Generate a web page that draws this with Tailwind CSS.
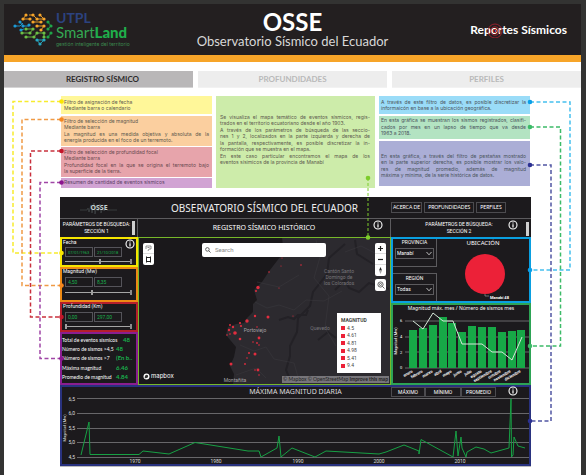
<!DOCTYPE html>
<html lang="es">
<head>
<meta charset="utf-8">
<meta name="viewport" content="width=device-width, initial-scale=1">
<title>OSSE - Observatorio Sísmico del Ecuador</title>
<script src="https://cdn.jsdelivr.net/npm/@tailwindcss/browser@4"></script>
</head>
<body class="bg-[#333332] pl-1 pr-[5px] pt-1 min-h-screen flex flex-col overflow-x-hidden font-['Inter',sans-serif]">
<svg class="hidden">
  <symbol id="info" viewBox="0 0 10 10"><circle cx="5" cy="5" r="4" fill="none" stroke="#fff" stroke-width="1.1"/><path d="M5 2.4v1M5 4.2v3.2" stroke="#fff" stroke-width="1.2"/></symbol>
</svg>
<div class="relative bg-white grow">

<header class="bg-[#231f20] border-b-[7px] border-[#f7a529] h-[58px] grid grid-cols-[1fr_auto_1fr] items-center">
  <div class="flex items-center gap-[3px] pl-[9px]">
    <svg class="w-10 h-[34px]" viewBox="0 0 40 34">
      <g stroke-width=".9" fill="none">
        <path stroke="#1c9ad6" d="M2 13h5l3-3M7 9l3 4h6M8 17l3-1"/>
        <path stroke="#f7a529" d="M13 2l-3 4h7M20 2h-4M20 2l4 4h7M27 2l4 4M20 9h8M24 13h7l-3 4"/>
        <path stroke="#6cbf45" d="M9 20h8l3-4h-7M13 24h8l3-4h7M31 20v4"/>
        <path stroke="#1fa548" d="M35 9l3 4l-3 3M38 20l-3 4"/>
        <path stroke="#27a9c4" d="M24 27h7l-4 4z"/>
      </g>
      <g fill="#1c9ad6"><circle cx="2" cy="13" r="1.6"/><circle cx="7" cy="9" r="1.6"/><circle cx="8" cy="17" r="1.6"/><circle cx="10" cy="13" r="1.6"/><circle cx="16" cy="12" r="1.6"/></g>
      <g fill="#f7a529"><circle cx="13" cy="2" r="1.6"/><circle cx="20" cy="2" r="1.6"/><circle cx="27" cy="2" r="1.6"/><circle cx="10" cy="6" r="1.6"/><circle cx="17" cy="6" r="1.6"/><circle cx="24" cy="6" r="1.6"/><circle cx="31" cy="6" r="1.6"/><circle cx="20" cy="9" r="1.6"/><circle cx="28" cy="9" r="1.6"/><circle cx="24" cy="13" r="1.6"/><circle cx="31" cy="13" r="1.6"/><circle cx="28" cy="17" r="1.6"/></g>
      <g fill="#6cbf45"><circle cx="13" cy="16" r="1.6"/><circle cx="20" cy="16" r="1.6"/><circle cx="9" cy="20" r="1.6"/><circle cx="17" cy="20" r="1.6"/><circle cx="24" cy="20" r="1.6"/><circle cx="13" cy="24" r="1.6"/><circle cx="21" cy="24" r="1.6"/><circle cx="31" cy="20" r="1.6"/><circle cx="31" cy="24" r="1.6"/></g>
      <g fill="#1fa548"><circle cx="35" cy="9" r="1.6"/><circle cx="38" cy="13" r="1.6"/><circle cx="35" cy="16" r="1.6"/><circle cx="38" cy="20" r="1.6"/><circle cx="35" cy="24" r="1.6"/></g>
      <g fill="#27a9c4"><circle cx="24" cy="27" r="1.6"/><circle cx="31" cy="27" r="1.6"/><circle cx="27" cy="31" r="1.6"/></g>
    </svg>
    <div class="whitespace-nowrap">
      <div class="font-['Lato',sans-serif] font-bold text-[14px] leading-[14px] text-[#2c427f]">UTPL</div>
      <div class="font-['Lato',sans-serif] text-[15px] leading-[15px] text-[#35a853]">Smart<b class="font-black text-[#1fae4b]">Land</b></div>
      <div class="text-[5px] leading-[8px] text-[#3c8a50]">gestión inteligente del territorio</div>
    </div>
  </div>
  <div class="text-center text-white font-['Lato',sans-serif] whitespace-nowrap">
    <h1 class="text-[24px] leading-[24px] font-bold">OSSE</h1>
    <p class="text-[13px] leading-[15px] text-[#d8d8d8]">Observatorio Sísmico del Ecuador</p>
  </div>
  <div class="flex justify-end pr-[14px]">
    <a href="#" class="relative font-['Lato',sans-serif] font-bold text-[12px] leading-4 text-white whitespace-nowrap">Reportes Sísmicos
      <svg class="absolute left-[17px] top-0 size-4" viewBox="0 0 16 16" fill="none" stroke="#b3202e"><circle cx="8" cy="9" r="7" stroke-width=".8"/><circle cx="8" cy="9" r="4.2" stroke-width=".9"/><circle cx="8" cy="9" r="1.6"/></svg>
    </a>
  </div>
</header>

<nav class="mt-[9px] grid grid-cols-3 gap-[5px] font-['Lato',sans-serif] font-bold text-[8px] leading-4 text-center">
  <a href="#" class="bg-[#b9b7b8] text-[#2d2b2c] border-b border-[#d5d4d5] pl-2">REGISTRO SÍSMICO</a>
  <a href="#" class="bg-[#ededed] text-[#b9b9b9] border-b border-[#f2f2f2]">PROFUNDIDADES</a>
  <a href="#" class="bg-[#ededed] text-[#b9b9b9] border-b border-[#f2f2f2]">PERFILES</a>
</nav>

<section class="mt-2 pl-[57px] pr-[51px] grid grid-cols-[151fr_159fr_151fr] gap-1 text-[5px] leading-[6px] text-[#5d5a4e] whitespace-nowrap">
  <div class="flex flex-col gap-px">
    <div class="bg-[#fff799] h-[18px] px-[3px] pt-[3px]"><p>Filtro de asignación de fecha</p><p>Mediante barra o calendario</p></div>
    <div class="bg-[#fbcf9f] h-[30px] px-[3px] pt-[2px] mt-px"><p>Filtro de selección de magnitud</p><p>Mediante barra</p><p class="mt-px [text-align-last:justify]">La magnitud es una medida objetiva y absoluta de la</p><p>energía producida en el foco de un terremoto.</p></div>
    <div class="bg-[#e7a4ab] h-[30px] px-[3px] pt-[2px] text-[#6a4a50]"><p>Filtro de selección de profundidad focal</p><p>Mediante barra</p><p class="mt-px [text-align-last:justify]">Profundidad focal en la que se origina el terremoto bajo</p><p>la superficie de la tierra.</p></div>
    <div class="bg-[#d1a3d3] h-[10px] px-[3px] pt-px text-[#5c4163]"><p>Resumen de cantidad de eventos sísmicos</p></div>
  </div>
  <div class="bg-[#cdecaa] pl-1 pr-[5px] pt-[18px] flex flex-col gap-px">
    <div><p class="[text-align-last:justify]">Se visualiza el mapa temático de eventos sísmicos, regis-</p><p>trados en el territorio ecuatoriano desde el año 1903.</p></div>
    <div><p class="[text-align-last:justify]">A través de los parámetros de búsqueda de las seccio-</p><p class="[text-align-last:justify]">nes 1 y 2, localizados en la parte izquierda y derecha de</p></div>
    <div><p class="[text-align-last:justify]">la pantalla, respectivamente, es posible discretizar la in-</p><p>formación que se muestra en el mapa.</p></div>
    <div><p class="[text-align-last:justify]">En este caso particular encontramos el mapa de los</p><p>eventos sísimicos de la provincia de Manabí</p></div>
  </div>
  <div class="flex flex-col gap-[2px] text-[#4a545c]">
    <div class="bg-[#9adcf8] h-[18px] pl-[2px] pr-1 pt-[3px]"><p class="[text-align-last:justify]">A través de este filtro de datos, es posible discretizar la</p><p>informaicón en base a la ubicación geográfica.</p></div>
    <div class="bg-[#b3e3c2] h-[23px] pl-[2px] pr-1 pt-px"><p class="[text-align-last:justify]">En esta gráfica se muestran los sismos registrados, clasifi-</p><p class="mt-px [text-align-last:justify]">cados por mes en un lapso de tiempo que va desde</p><p>1963 a 2018.</p></div>
    <div class="bg-[#abaed6] h-[45px] pl-[2px] pr-1 pt-3"><p class="[text-align-last:justify]">En esta gráfica, a través del filtro de pestañas mostrado</p><p class="[text-align-last:justify]">en la parte superior derecha, es posible mostrar los valo-</p><p class="mt-px [text-align-last:justify]">res de magnitud promedio, además de magnitud</p><p>máxima y mínima, de la serie histórica de datos.</p></div>
  </div>
</section>

<main class="mt-[9px] ml-14 mr-[50px] bg-[#1c1a1d] text-white font-['Roboto',sans-serif] whitespace-nowrap shadow-[0_1px_0_#bbb]">
  <div class="grid grid-cols-[78px_1fr_140px] h-[22px] items-center border-b border-[#5c5b5e]">
    <div class="relative grid place-items-center text-[7px] leading-[10px] font-bold font-['Noto_Sans',sans-serif] text-[#c4d0d0]">
      <svg class="col-start-1 row-start-1 w-[38px] h-[14px]" viewBox="0 0 38 14" fill="none" stroke="#4a5052" stroke-width=".6"><path d="M0 9h7l1-2 1 4 2-7 1 8 2-10 1 11 2-9 1 6 2-7 1 9 2-6 1 4 2-3 1 2h10"/></svg>
      <span class="col-start-1 row-start-1 relative">OSSE</span>
    </div>
    <h2 class="text-center text-[10px] leading-[14px] text-[#eee] font-['Noto_Sans',sans-serif]">OBSERVATORIO SÍSMICO DEL ECUADOR</h2>
    <div class="flex gap-[2px] text-[5px] leading-[9px] font-['Lato',sans-serif]">
      <button class="border border-[#4c4b4f] px-px">ACERCA DE</button><button class="border border-[#4c4b4f] px-[3px]">PROFUNDIDADES</button><button class="border border-[#4c4b4f] px-[3px]">PERFILES</button>
    </div>
  </div>

  <div class="grid grid-cols-[78px_1fr_140px]">
    <!-- Sección 1 -->
    <div class="flex flex-col">
      <div class="h-[18px] flex items-center justify-center border-r border-[#5c5b5e] relative pr-1 text-[5px] leading-[7px] text-center"><h3>PARÁMETROS DE BÚSQUEDA:<br>SECCIÓN 1</h3><span class="absolute right-[2px] top-[2px] w-[3px] h-[14px] bg-[#cfcfcf]"></span></div>
      <div class="relative h-[30px] border-2 border-[#f6e500] px-[3px] text-[5px]">
        <div class="leading-[7px] -ml-[2px]">Fecha</div>
        <svg class="absolute right-px top-0 size-[10px]"><use href="#info"/></svg>
        <div class="mt-px flex gap-px text-[#19b04c] text-[4px]"><input aria-label="Fecha desde" value="07/01/1963" class="w-7 h-[10px] border border-[#55545a] pl-[2px]"><input aria-label="Fecha hasta" value="21/10/2018" class="w-7 h-[10px] border border-[#55545a] pl-[2px]"></div>
        <div class="mt-[2px] mr-px h-[5px] flex items-center border-r-2 border-[#8c8c8c]"><input type="range" aria-label="Rango de fecha" value="54" class="w-full h-px appearance-none bg-[#a5a5a5] [&::-webkit-slider-thumb]:appearance-none [&::-webkit-slider-thumb]:w-[2px] [&::-webkit-slider-thumb]:h-[5px] [&::-webkit-slider-thumb]:bg-[#a0a0a0]"></div>
      </div>
      <div class="h-[35px] border-2 border-[#ee8a14] px-[3px] text-[5px]">
        <div class="leading-[5px] -ml-[2px]">Magnitud (Mw)</div>
        <div class="mt-[3px] flex gap-px text-[#19b04c]"><input aria-label="Magnitud mínima" value="4,50" class="w-7 h-[10px] border border-[#55545a] pl-[2px]"><input aria-label="Magnitud máxima" value="8,35" class="w-7 h-[10px] border border-[#55545a] pl-[2px]"></div>
        <div class="mt-[3px] mr-px h-[5px] flex items-center border-r-2 border-[#8c8c8c]"><input type="range" aria-label="Rango de magnitud" value="42" class="w-full h-px appearance-none bg-[#a5a5a5] [&::-webkit-slider-thumb]:appearance-none [&::-webkit-slider-thumb]:w-[2px] [&::-webkit-slider-thumb]:h-[5px] [&::-webkit-slider-thumb]:bg-[#a0a0a0]"></div>
      </div>
      <div class="h-[30px] border-2 border-[#b51f2b] px-[3px] text-[5px]">
        <div class="leading-[5px] -ml-[2px]">Profundidad (Km)</div>
        <div class="mt-[3px] flex gap-px text-[#19b04c]"><input aria-label="Profundidad mínima" value="0,00" class="w-7 h-[10px] border border-[#55545a] pl-[2px]"><input aria-label="Profundidad máxima" value="297,00" class="w-7 h-[10px] border border-[#55545a] pl-[2px]"></div>
        <div class="mt-[2px] mr-px h-[5px] flex items-center border-r-2 border-[#8c8c8c]"><input type="range" aria-label="Rango de profundidad" value="0" class="w-full h-px appearance-none bg-[#a5a5a5] [&::-webkit-slider-thumb]:appearance-none [&::-webkit-slider-thumb]:w-[2px] [&::-webkit-slider-thumb]:h-[5px] [&::-webkit-slider-thumb]:bg-[#a0a0a0]"></div>
      </div>
      <dl class="h-[53px] border-2 border-[#8a1e90] flex flex-col justify-around py-px text-[5px] leading-[8px] font-['Lato',sans-serif]">
        <div class="flex"><dt class="w-[61px]">Total de eventos sísmicos</dt><dd class="text-[6px] font-bold text-[#19b04c]">48</dd></div>
        <div class="flex"><dt class="w-[54px]">Número de sismos &gt;4,5</dt><dd class="text-[6px] font-bold text-[#19b04c]">48</dd></div>
        <div class="flex"><dt class="w-[54px]">Número de sismos &gt;7</dt><dd class="text-[6px] font-bold text-[#19b04c]">(En b..</dd></div>
        <div class="flex"><dt class="w-[54px]">Máxima magnitud</dt><dd class="text-[6px] font-bold text-[#19b04c]">6.46</dd></div>
        <div class="flex"><dt class="w-[54px]">Promedio de magnitud</dt><dd class="text-[6px] font-bold text-[#19b04c]">4.84</dd></div>
      </dl>
    </div>

    <!-- Mapa -->
    <div class="relative flex flex-col">
      <div class="h-[18px] flex items-center justify-center border-r border-[#5c5b5e] text-[7px] font-['Noto_Sans',sans-serif]"><h3>REGISTRO SÍSMICO HISTÓRICO</h3><svg class="absolute right-2 top-px size-[10px]"><use href="#info"/></svg></div>
      <div class="relative grow border border-[#77b82a] bg-[#1a181b] overflow-hidden">
        <svg class="absolute inset-0 w-full h-full" viewBox="139 238 251 146" preserveAspectRatio="none">
          <path fill="#2c2a2f" d="M282 237L283 247L280 257L270 270L262 282L254 290L257 300L253 304L253 312L247 318L244 323L236 324L228 327L226 335L231 341L236 347L234 357L230 366L234 374L233 385H392V237Z"/>
          <g fill="none" stroke="#232126" stroke-width="2"><path d="M292 384l-6-14 4-14 0-10 7-14 1-14 12-12 3-14 14-18 2-16 16-14"/><path d="M279 320l9-3 6 2 4-4 8 0 2-5M335 290l10-10 4 8 10 4 10-9 20 6M355 240l2 14 16 10M318 340l10-8 8 6"/></g>
          <g fill="none" stroke="#39373c" stroke-width=".6"><path d="M255 302l12 6 12-3 15 5 12-10 18 1 18-10M257 282l22 5 20-12M240 345l14 6 12-4 8 12 20 4 4 14M316 240l4 17-6 21 15 18-4 32 11 18M345 252l16-6 20 10M236 375l20-7 10 10"/></g>
          <g fill="#e22d3f"><circle cx="258" cy="287.500" r="1.700"/><circle cx="256" cy="291" r="1"/><circle cx="301" cy="265" r=".8"/><circle cx="282" cy="258" r=".6"/><circle cx="281" cy="266" r=".6"/><circle cx="269" cy="272" r=".8"/><circle cx="279" cy="288" r=".6"/><circle cx="293" cy="316" r=".6"/><circle cx="255" cy="316" r="1.200"/><circle cx="268" cy="317" r="1.500"/><circle cx="247" cy="321" r="1.700"/><circle cx="240" cy="323" r="1.100"/><circle cx="241" cy="326" r="1.100"/><circle cx="230" cy="325" r="1"/><circle cx="233" cy="327" r="1.200"/><circle cx="229" cy="330" r="1.200"/><circle cx="235" cy="333" r="1.800"/><circle cx="227" cy="335" r=".8"/><circle cx="230" cy="334" r=".8"/><circle cx="240" cy="339" r="1.300"/><circle cx="257" cy="327" r=".8"/><circle cx="259" cy="338" r="1.400"/><circle cx="253" cy="342" r=".8"/><circle cx="257" cy="343" r=".9"/><circle cx="259" cy="345" r=".8"/><circle cx="249" cy="353" r="1"/><circle cx="255" cy="354" r="1.500"/><circle cx="247" cy="358" r=".8"/><circle cx="245" cy="364" r=".9"/><circle cx="231" cy="364" r="1.500"/><circle cx="255" cy="370" r=".8"/><circle cx="258" cy="370" r="1.400"/><circle cx="259" cy="375" r=".8"/></g>
          <g fill="#77757a" font-size="5" font-family="Roboto, sans-serif" text-anchor="middle"><text x="339" y="273">Cantón Santo</text><text x="339" y="279">Domingo de</text><text x="339" y="285">los Colorados</text><text x="255" y="332" fill="#a5a3a8">Portoviejo</text><text x="320" y="330">Quevedo</text><text x="235" y="382" fill="#a5a3a8">Montañita</text></g>
        </svg>
        <div class="absolute left-1 top-[5px] w-[11px] h-[22px] bg-white rounded-[2px] flex flex-col">
          <button aria-label="Selección libre" class="h-[11px] grid place-items-center border-b border-[#ddd]"><svg class="size-[7px]" viewBox="0 0 7 7" fill="none" stroke="#777" stroke-width=".8"><path d="M1 4V1h5v3H4l-1 2M2.500 2.500h2"/></svg></button>
          <button aria-label="Selección rectangular" class="h-[11px] grid place-items-center"><svg class="size-[7px]" viewBox="0 0 7 7" fill="none" stroke="#222"><rect x="1.500" y="1.500" width="4" height="4"/><path d="M1 1h1M5 1h1M1 6h1M5 6h1"/></svg></button>
        </div>
        <label class="absolute left-[63px] right-[64px] top-[5px] h-[14px] bg-white rounded-[2px] flex items-center pl-[3px] gap-1">
          <svg class="size-[6px] shrink-0" viewBox="0 0 6 6" fill="none" stroke="#555" stroke-width=".9"><circle cx="2.400" cy="2.400" r="1.800"/><path d="M3.700 3.700L5.600 5.600"/></svg>
          <input type="search" placeholder="Search" aria-label="Buscar" class="grow min-w-0 text-[6px] leading-[8px] placeholder:text-[#888]">
        </label>
        <div class="absolute right-1 top-[5px] w-[11px] flex flex-col gap-[3px] text-[#222]">
          <div class="bg-white rounded-[2px] h-[33px] grid grid-rows-3 divide-y divide-[#ddd]">
            <button aria-label="Acercar" class="grid place-items-center"><svg class="size-[5px]" viewBox="0 0 5 5" stroke="#222" stroke-width="1.200"><path d="M0 2.500h5M2.500 0v5"/></svg></button>
            <button aria-label="Alejar" class="grid place-items-center"><svg class="size-[5px]" viewBox="0 0 5 5" stroke="#222" stroke-width="1.200"><path d="M0 2.500h5"/></svg></button>
            <button aria-label="Norte" class="grid place-items-center"><svg class="size-[7px]" viewBox="0 0 7 7"><path d="M3.500 0L5 3.500H2z" fill="#222"/><path d="M3.500 7L5 3.500H2z" fill="#aaa"/></svg></button>
          </div>
          <button aria-label="Ajustar zoom" class="bg-white rounded-[2px] h-[12px] grid place-items-center"><svg class="size-2" viewBox="0 0 8 8" fill="none" stroke="#555" stroke-width=".9"><circle cx="3.500" cy="3.500" r="2.600"/><circle cx="3.500" cy="3.500" r="1"/><path d="M5.400 5.400L7.500 7.500"/></svg></button>
        </div>
        <div class="absolute right-[9px] bottom-[11px] w-[44px] h-[60px] bg-white text-[#444] pl-[4px] pt-1 text-[5px] leading-[6px]">
          <div class="font-bold">MAGNITUD</div>
          <ul class="leading-[7px] mt-px">
            <li class="flex items-center gap-[2px] h-[8px]"><i class="size-[4px] bg-[#ec2138]"></i>4.5</li><li class="flex items-center gap-[2px] h-[7px]"><i class="size-[4px] bg-[#ec2138]"></i>4.61</li><li class="flex items-center gap-[2px] h-[8px]"><i class="size-[4px] bg-[#ec2138]"></i>4.81</li><li class="flex items-center gap-[2px] h-[7px]"><i class="size-[4px] bg-[#ec2138]"></i>4.98</li><li class="flex items-center gap-[2px] h-[8px]"><i class="size-[4px] bg-[#ec2138]"></i>5.41</li><li class="flex items-center gap-[2px] h-[7px]"><i class="size-[4px] bg-[#ec2138]"></i>9.4</li>
          </ul>
        </div>
        <div class="absolute left-1 bottom-1 flex items-center gap-px text-[6px] leading-[8px] font-['Inter',sans-serif]"><svg class="size-[7px]" viewBox="0 0 7 7"><circle cx="3.500" cy="3.500" r="3" fill="#fff"/><path d="M1.700 5.300c0-4 2-3.800 3.200-3 1 2-.8 3.200-3.200 3z" fill="#333"/></svg>mapbox</div>
        <div class="absolute right-px bottom-px bg-[#77757a] text-[#222] text-[5px] leading-[7px] px-px font-['Lato',sans-serif]">© Mapbox © OpenStreetMap <b>Improve this map</b></div>
      </div>
      <svg class="absolute right-[20px] -top-[44px] w-[6px] h-[65px] z-10" viewBox="0 0 6 65"><path d="M3 3V62" stroke="#7dcc2c" stroke-width="1" stroke-dasharray="3 2"/><circle cx="3" cy="3" r="2.300" fill="#7dcc2c"/><circle cx="3" cy="62.500" r="2.300" fill="#7dcc2c"/></svg>
    </div>

    <!-- Sección 2 -->
    <div class="flex flex-col">
      <div class="relative h-[18px] flex items-center justify-center pr-1 text-[5px] leading-[7px] text-center"><h3>PARÁMETROS DE BÚSQUEDA:<br>SECCIÓN 2</h3><svg class="absolute right-[13px] top-px size-[10px]"><use href="#info"/></svg><span class="absolute right-[2px] top-[3px] w-[3px] h-[14px] bg-[#cfcfcf]"></span></div>
      <div class="h-[66px] border-2 border-[#0a9fe0] grid grid-cols-[44px_1fr]">
        <div class="flex flex-col gap-[6px] text-[5px] leading-[6px] text-center">
          <label class="h-7 border-r border-b border-[#5c5b5e] px-[2px] flex flex-col gap-[3px]">PROVINCIA<span class="relative block"><select class="w-full h-[11px] border border-[#5c5b5e] appearance-none bg-transparent pl-px text-[5px] leading-[9px]"><option>Manabí</option></select><svg class="absolute right-[2px] top-[3px] w-[6px] h-[5px]" viewBox="0 0 6 5" fill="none" stroke="#ccc" stroke-width=".9"><path d="M.5 1L3 3.800 5.500 1"/></svg></span></label>
          <label class="h-7 border-r border-t border-[#5c5b5e] px-[2px] pt-px flex flex-col gap-[3px]">REGIÓN<span class="relative block"><select class="w-full h-[11px] border border-[#5c5b5e] appearance-none bg-transparent pl-px text-[5px] leading-[9px]"><option>Todas</option></select><svg class="absolute right-[2px] top-[3px] w-[6px] h-[5px]" viewBox="0 0 6 5" fill="none" stroke="#ccc" stroke-width=".9"><path d="M.5 1L3 3.800 5.500 1"/></svg></span></label>
        </div>
        <div class="flex flex-col items-center">
          <h4 class="text-[6px] leading-[8px] font-['Noto_Sans',sans-serif]">UBICACIÓN</h4>
          <svg class="w-[66px] h-[52px] mt-px" viewBox="0 0 66 52"><circle cx="35" cy="26" r="20" fill="#ec2138"/><path d="M35 46v2h4" stroke="#aaa" stroke-width=".6" fill="none"/><text x="40" y="51" font-size="4" font-weight="bold" fill="#fff" font-family="Roboto, sans-serif">Manabí 48</text></svg>
        </div>
      </div>
      <div class="grow border-2 border-[#2da355]">
        <svg class="w-full block" viewBox="393 305 136 78" font-family="Roboto, sans-serif" fill="#fff">
          <text x="461" y="310" font-size="5" font-family="Noto Sans, sans-serif" text-anchor="middle">Magnitud máx. mes / Número de sismos mes</text>
          <path d="M405 321h124M405 337h124M405 352h124M405 368h124" stroke="#68676a" stroke-width="1"/>
          <g font-size="4" text-anchor="middle"><text x="401" y="322">6</text><text x="401" y="338">4</text><text x="401" y="354">2</text><text x="401" y="369">0</text><text transform="translate(397 341) rotate(-90)">Magnitud (Mw)</text></g>
          <path fill="#17a847" d="M409 330h8v38h-8zM419 328h8v40h-8zM429 325h8v43h-8zM439 317h8v51h-8zM448 323h8v45h-8zM458 332h8v36h-8zM468 326h8v42h-8zM478 327h8v41h-8zM488 327h8v41h-8zM498 332h8v36h-8zM508 331h8v37h-8zM517 330h8v38h-8z"/>
          <path d="M413 321L423 329L433 313L443 321L453 321L462 344H482L492 352H502L512 360L522 337" fill="none" stroke="#d5e8d9" stroke-width="1"/>
          <g font-size="4" font-weight="bold" text-anchor="end"><text transform="translate(413 372) rotate(-30)">enero</text><text transform="translate(423 372) rotate(-30)">febrero</text><text transform="translate(433 372) rotate(-30)">marzo</text><text transform="translate(442 372) rotate(-30)">abril</text><text transform="translate(452 372) rotate(-30)">mayo</text><text transform="translate(462 372) rotate(-30)">junio</text><text transform="translate(472 372) rotate(-30)">julio</text><text transform="translate(482 372) rotate(-30)">agosto</text><text transform="translate(492 372) rotate(-30)">septiembre</text><text transform="translate(501 372) rotate(-30)">octubre</text><text transform="translate(511 372) rotate(-30)">noviembre</text><text transform="translate(521 372) rotate(-30)">diciembre</text></g>
        </svg>
      </div>
    </div>
  </div>

  <div class="border-2 border-[#29327f]">
    <div class="grid grid-cols-[138px_1fr_138px] h-[10px]">
      <h3 class="col-start-2 text-center text-[7px] leading-[9px] text-[#ddd] font-['Noto_Sans',sans-serif]">MÁXIMA MAGNITUD DIARIA</h3>
      <div class="relative grid grid-cols-[34px_36px_35px] text-[5px] leading-[8px]"><button class="border border-[#4c4b4f]">MÁXIMO</button><button class="border border-[#4c4b4f]">MÍNIMO</button><button class="border border-[#4c4b4f]">PROMEDIO</button><svg class="absolute right-[11px] -top-px size-[10px]"><use href="#info"/></svg></div>
    </div>
    <svg class="w-full block" viewBox="62 397 467 67" font-family="Roboto, sans-serif" fill="#ddd">
      <path d="M77 398.500h452M77 413.500h452M77 428.500h452M77 442.500h452M77 457.500h452" stroke="#68676a"/>
      <g font-size="5" text-anchor="end"><text x="75" y="401">6,5</text><text x="75" y="415">6,0</text><text x="75" y="430">5,5</text><text x="75" y="444">5,0</text><text x="75" y="459">4,5</text></g>
      <text transform="translate(66 428) rotate(-90)" font-size="4" text-anchor="middle">Magnitud (Mw)</text>
      <g font-size="5" text-anchor="middle"><text x="135" y="463">1970</text><text x="216" y="463">1980</text><text x="298" y="463">1990</text><text x="379" y="463">2000</text><text x="460" y="463">2010</text></g>
      <path fill="none" stroke="#17a044" stroke-width="1" d="M81 455L89 422L90 454.500H139L143 451L169 454L195 442.500L248 451H259L261 457L277 448L279 436L281 457L292 448L315 457L326 451L379 454L386 452L404 445L419 451V454L421 439.500L453 457L456 431L458 456L461 437L462 448L466 457L467 452L476 447L484 449L491 453L509 448L511 399L511.500 457L513 455L514 437L518 446L525 448"/>
    </svg>
  </div>
</main>

<!-- Conectores entre las notas y los paneles -->
<svg class="absolute left-0 top-0 w-[62px] h-[471px] pointer-events-none" viewBox="4 4 62 471" fill="none" stroke-width="1.500" stroke-dasharray="4 2.500">
  <g stroke="#f7ec2e"><path d="M61 101.500H13V253H61"/></g><g stroke="#f09a45"><path d="M61 119.500H22V285.500H61"/></g><g stroke="#c9303d"><path d="M61 151H30.500V317H61"/></g><g stroke="#a046a6"><path d="M61 182.500H40V358.500H61"/></g>
  <g stroke="none"><g fill="#fbe600"><circle cx="61.500" cy="101.500" r="2.300"/><circle cx="61.500" cy="253" r="2.300"/></g><g fill="#f5871f"><circle cx="61.500" cy="119.500" r="2.300"/><circle cx="61.500" cy="285.500" r="2.300"/></g><g fill="#c4162a"><circle cx="61.500" cy="151" r="2.300"/><circle cx="61.500" cy="317" r="2.300"/></g><g fill="#8b158f"><circle cx="61.500" cy="182.500" r="2.300"/><circle cx="61.500" cy="358.500" r="2.300"/></g></g>
</svg>
<svg class="absolute right-0 top-0 w-[55px] h-[471px] pointer-events-none" viewBox="526 4 55 471" fill="none" stroke-width="1.500" stroke-dasharray="4 2.500">
  <path stroke="#45c0ee" d="M530 102H570V270H530"/><path stroke="#3dbb68" d="M530 127H560.500V346H530"/><path stroke="#5055a3" d="M530 165H551V421H530"/>
  <g stroke="none"><g fill="#0a9fe8"><circle cx="530" cy="102" r="2.300"/><circle cx="530" cy="270" r="2.300"/></g><g fill="#3dbb68"><circle cx="530" cy="127" r="2.300"/><circle cx="530" cy="346" r="2.300"/></g><g fill="#2c3192"><circle cx="530" cy="165" r="2.300"/><circle cx="530" cy="421" r="2.300"/></g></g>
</svg>
</div>
</body>
</html>
